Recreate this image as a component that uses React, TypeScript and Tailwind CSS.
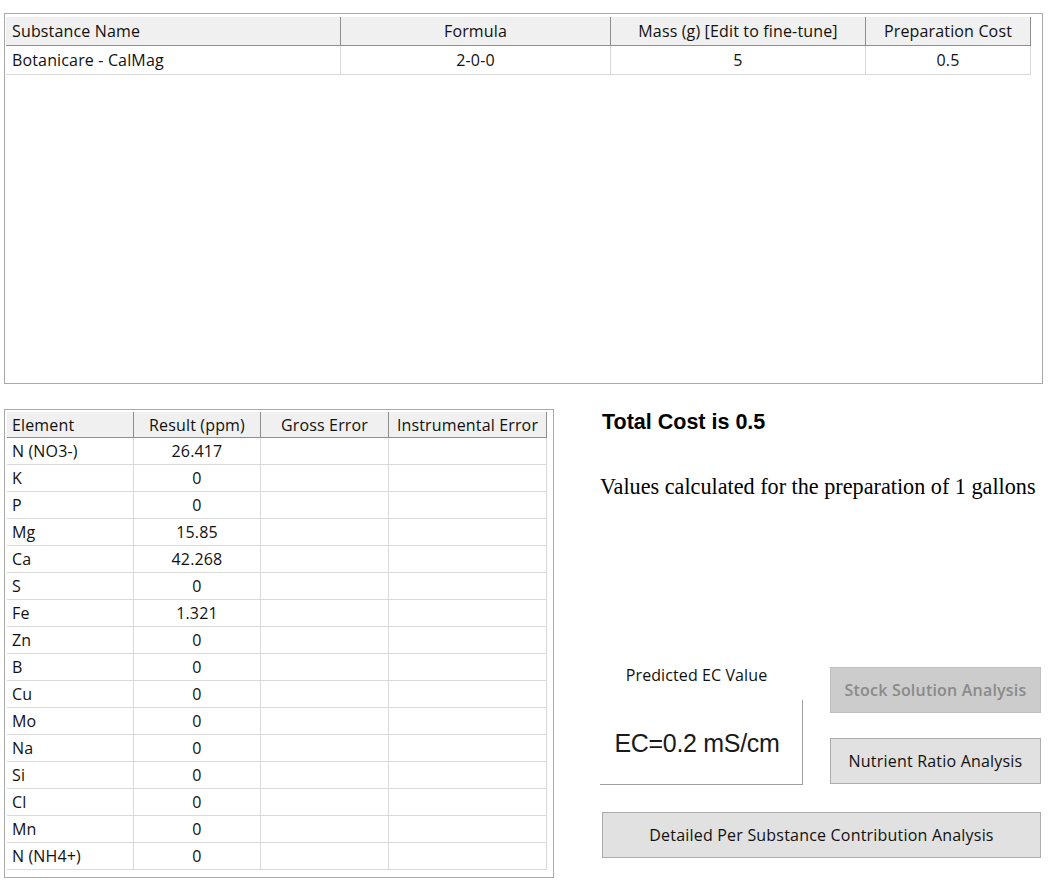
import React from "react";

const ui = { fontFamily: '"Open Sans", "Noto Sans", "Liberation Sans", sans-serif' };

const topCols = [
  { label: "Substance Name", w: "w-[335px]", align: "text-left pl-[6px]", val: "Botanicare - CalMag" },
  { label: "Formula", w: "w-[270px]", align: "text-center", val: "2-0-0" },
  { label: "Mass (g) [Edit to fine-tune]", w: "w-[255px]", align: "text-center", val: "5" },
  { label: "Preparation Cost", w: "w-[165px]", align: "text-center", val: "0.5" },
];

const elements: [string, string][] = [
  ["N (NO3-)", "26.417"],
  ["K", "0"],
  ["P", "0"],
  ["Mg", "15.85"],
  ["Ca", "42.268"],
  ["S", "0"],
  ["Fe", "1.321"],
  ["Zn", "0"],
  ["B", "0"],
  ["Cu", "0"],
  ["Mo", "0"],
  ["Na", "0"],
  ["Si", "0"],
  ["Cl", "0"],
  ["Mn", "0"],
  ["N (NH4+)", "0"],
];

export default function App() {
  return (
    <div className="w-[1052px] h-[882px] bg-white text-[#111111] overflow-hidden tracking-[0.15px]" style={ui}>
      {/* Top substances panel */}
      <div className="ml-[4px] mt-[13px] w-[1039px] h-[371px] border border-[#a9a9a9] bg-white pt-[3px] pl-[1px]">
        <div className="flex h-[29px] w-[1025px] bg-[#f0f0f0] border-b border-[#8e8e8e] text-[16px]">
          {topCols.map((c) => (
            <div key={c.label} className={`${c.w} ${c.align} h-full leading-[28px] border-r border-[#8e8e8e]`}>
              {c.label}
            </div>
          ))}
        </div>
        <div className="flex h-[29px] w-[1025px] border-b border-[#d9d9d9] text-[16px]">
          {topCols.map((c) => (
            <div key={c.label} className={`${c.w} ${c.align} h-full leading-[28px] border-r border-[#d9d9d9]`}>
              {c.val}
            </div>
          ))}
        </div>
      </div>

      {/* Bottom area */}
      <div className="flex items-start mt-[25px]">
        {/* Elements table */}
        <div className="ml-[4px] w-[550px] h-[469px] border border-[#a9a9a9] bg-white pt-[2px] pl-[2px]">
          <div className="flex h-[26px] w-[540px] bg-[#f0f0f0] border-b border-[#8e8e8e] text-[16px]">
            <div className="w-[127px] pl-[5px] leading-[26px] border-r border-[#8e8e8e]">Element</div>
            <div className="w-[127px] text-center leading-[26px] border-r border-[#8e8e8e]">Result (ppm)</div>
            <div className="w-[128px] text-center leading-[26px] border-r border-[#8e8e8e]">Gross Error</div>
            <div className="w-[158px] text-center leading-[26px] border-r border-[#8e8e8e] whitespace-nowrap">
              Instrumental Error
            </div>
          </div>
          {elements.map(([el, v]) => (
            <div key={el} className="flex h-[27px] w-[540px] border-b border-[#d9d9d9] text-[16px]">
              <div className="w-[127px] pl-[5px] leading-[26px] border-r border-[#d9d9d9]">{el}</div>
              <div className="w-[127px] text-center leading-[26px] border-r border-[#d9d9d9]">{v}</div>
              <div className="w-[128px] border-r border-[#d9d9d9]"></div>
              <div className="w-[158px] border-r border-[#d9d9d9]"></div>
            </div>
          ))}
        </div>

        {/* Right column */}
        <div className="ml-[46px] w-[441px] flex flex-col tracking-normal">
          <div
            className="mt-[1px] ml-[2px] h-[24px] leading-[24px] text-[21.5px] font-bold text-black"
            style={{ fontFamily: '"Liberation Sans", Arial, sans-serif' }}
          >
            Total Cost is 0.5
          </div>
          <div
            className="mt-[40px] h-[26px] leading-[26px] text-[22.2px] text-black whitespace-nowrap"
            style={{ fontFamily: '"Liberation Serif", "Times New Roman", serif' }}
          >
            Values calculated for the preparation of 1 gallons
          </div>

          <div className="flex items-start mt-[167px]">
            <div className="w-[203px] flex flex-col">
              <div className="h-[18px] -mt-[1px] leading-[18px] text-[16px] text-center pr-[10px] tracking-[0.1px]">
                Predicted EC Value
              </div>
              <div className="mt-[16px] h-[85px] border-r border-b border-[#a0a0a0] flex items-center justify-center pr-[8px] pt-[4px]">
                <span
                  className="text-[25px] text-[#1a1a1a] tracking-[-0.3px]"
                  style={{ fontFamily: '"Liberation Sans", Arial, sans-serif' }}
                >
                  EC=0.2 mS/cm
                </span>
              </div>
            </div>
            <div className="ml-[27px] w-[211px] flex flex-col tracking-[0.2px]">
              <div className="h-[46px] bg-[#cccccc] border border-[#bfbfbf] flex items-center justify-center text-[16px] font-semibold text-[#8a8a8a] whitespace-nowrap">
                Stock Solution Analysis
              </div>
              <div className="mt-[25px] h-[46px] bg-[#e1e1e1] border border-[#adadad] flex items-center justify-center text-[16px] text-[#111111] whitespace-nowrap">
                Nutrient Ratio Analysis
              </div>
            </div>
          </div>

          <div className="mt-[27px] ml-[2px] w-[439px] h-[46px] bg-[#e1e1e1] border border-[#adadad] flex items-center justify-center text-[16px] text-[#111111] tracking-[0.2px]">
            Detailed Per Substance Contribution Analysis
          </div>
        </div>
      </div>
    </div>
  );
}
